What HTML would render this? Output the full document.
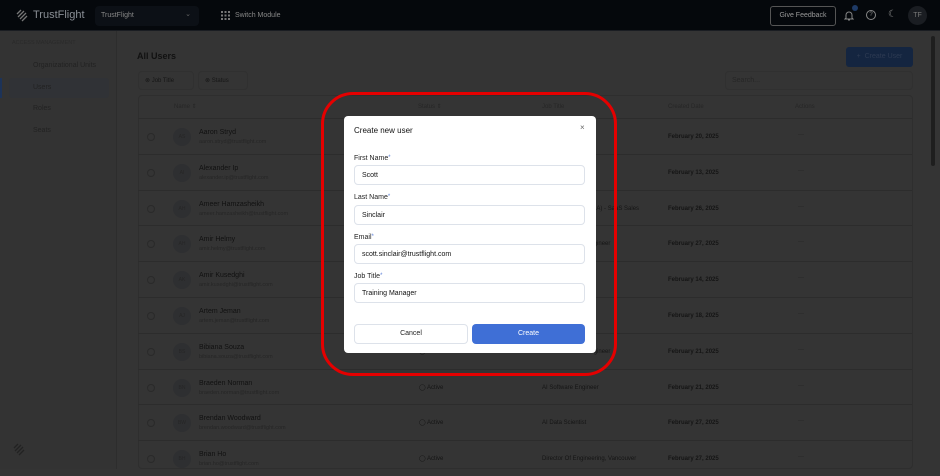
<!DOCTYPE html>
<html style="background:#343434"><head><meta charset="utf-8"><style>
*{box-sizing:border-box;margin:0;padding:0;line-height:1.2}
html,body{background:#343434}
body{width:940px;height:469px;overflow:hidden;font-family:"Liberation Sans",sans-serif;position:relative;color:#111}
.a{position:absolute}
.top{left:0;top:0;width:940px;height:31px;background:#05080c;border-bottom:1px solid #1a1d22}
.side{left:0;top:31px;width:117px;height:438px;background:#333;border-right:1px solid #2d2d2d}
.nav{left:9px;width:100px;height:20px;font-size:7px;color:#222;padding:6px 0 0 24px}
.row{left:138px;width:774px;height:36px;border-top:1px solid #2c2c2c}
.t{position:absolute;font-size:6px;color:#151515;white-space:nowrap}
.nm{font-size:7px;color:#111}
.em{font-size:5.5px;color:#262626}
.av{position:absolute;width:18px;height:18px;border-radius:50%;background:#2e2f31;font-size:5px;color:#262626;text-align:center;line-height:18px}
.cb{position:absolute;width:8px;height:8px;border-radius:50%;border:1px solid #2a2a2a}
.lbl{position:absolute;left:10px;font-size:7px;color:#222}
.lbl b{color:#5b7fd8;font-weight:normal;font-size:6px;vertical-align:top}
.in{position:absolute;left:10px;width:231px;height:20px;border:1px solid #dde2ea;border-radius:4px;font-size:7px;color:#111;padding:6px 0 0 7px}
</style></head><body>
<div class="a top">
 <svg class="a" style="left:15px;top:9px" width="14" height="14" viewBox="0 0 14 14" stroke="#777" stroke-width="1.3" fill="none"><path d="M2 5l4-4M3 8l6-6M5 10l6-6M7 12l5-5"/></svg>
 <div class="a" style="left:33px;top:9px;font-size:11px;color:#8a8f96">TrustFlight</div>
 <div class="a" style="left:95px;top:6px;width:104px;height:20px;background:#0c1016;border-radius:4px;font-size:7px;color:#888;padding:6px 0 0 6px">TrustFlight<span style="position:absolute;right:8px;top:5px;color:#666">⌄</span></div>
 <svg class="a" style="left:221px;top:11px" width="9" height="9" fill="#777"><g><rect x="0" y="0" width="2" height="2"/><rect x="3.5" y="0" width="2" height="2"/><rect x="7" y="0" width="2" height="2"/><rect x="0" y="3.5" width="2" height="2"/><rect x="3.5" y="3.5" width="2" height="2"/><rect x="7" y="3.5" width="2" height="2"/><rect x="0" y="7" width="2" height="2"/><rect x="3.5" y="7" width="2" height="2"/><rect x="7" y="7" width="2" height="2"/></g></svg>
 <div class="a" style="left:235px;top:12px;font-size:7px;color:#888">Switch Module</div>
 <div class="a" style="left:770px;top:6px;width:66px;height:20px;border:1px solid #555;border-radius:3px;font-size:7px;color:#999;text-align:center;line-height:18px">Give Feedback</div>
 <svg class="a" style="left:844px;top:10px" width="10" height="11" fill="none" stroke="#888" stroke-width="1"><path d="M2 8V5a3 3 0 016 0v3l1 1H1zM4 10h2"/></svg>
 <div class="a" style="left:852px;top:5px;width:6px;height:6px;border-radius:50%;background:#1e3a66"></div>
 <div class="a" style="left:866px;top:10px;width:10px;height:10px;border:1px solid #888;border-radius:50%;font-size:6px;color:#888;text-align:center;line-height:8px">?</div>
 <div class="a" style="left:888px;top:9px;font-size:10px;color:#888">☾</div>
 <div class="a" style="left:908px;top:6px;width:19px;height:19px;border-radius:50%;background:#1a1d22;font-size:7px;color:#777;text-align:center;line-height:19px">TF</div>
</div>
<div class="a side">
 <div class="a" style="left:12px;top:9px;font-size:5.5px;color:#2a2a2a">ACCESS MANAGEMENT</div>
 <div class="a nav" style="top:25px">Organizational Units</div>
 <div class="a nav" style="top:47px;background:#303236;border-radius:3px">Users</div>
 <div class="a" style="left:0;top:47px;width:2px;height:20px;background:#1d3358"></div>
 <div class="a nav" style="top:68px">Roles</div>
 <div class="a nav" style="top:90px">Seats</div>
 <svg class="a" style="left:12px;top:412px" width="14" height="14" viewBox="0 0 14 14" stroke="#222" stroke-width="1.3" fill="none"><path d="M2 5l4-4M3 8l6-6M5 10l6-6M7 12l5-5"/></svg>
</div>
<div class="a" style="left:137px;top:51px;font-size:9px;font-weight:bold;color:#111">All Users</div>
<div class="a" style="left:846px;top:47px;width:67px;height:20px;background:#142540;border-radius:3px;font-size:7px;color:#2d3a52;text-align:center;line-height:20px">+ &nbsp;Create User</div>
<div class="a" style="left:138px;top:71px;width:56px;height:19px;border:1px solid #303030;border-radius:4px;font-size:6px;color:#151515;padding:6px 0 0 6px">⊗ Job Title</div>
<div class="a" style="left:198px;top:71px;width:50px;height:19px;border:1px solid #303030;border-radius:4px;font-size:6px;color:#151515;padding:6px 0 0 6px">⊗ Status</div>
<div class="a" style="left:725px;top:71px;width:188px;height:19px;border:1px solid #303030;border-radius:4px;font-size:7px;color:#262626;padding:5px 0 0 6px">Search...</div>
<div class="a" style="left:138px;top:95px;width:775px;height:374px;border:1px solid #2e2e2e;border-radius:4px"></div>
<div class="t" style="left:174px;top:104px;color:#262626">Name ⇕</div>
<div class="t" style="left:418px;top:104px;color:#262626">Status ⇕</div>
<div class="t" style="left:542px;top:104px;color:#262626">Job Title</div>
<div class="t" style="left:668px;top:104px;color:#262626">Created Date</div>
<div class="t" style="left:795px;top:104px;color:#262626">Actions</div>
<div id="rows"></div>
<script>
var d=[["AS","Aaron Stryd","aaron.stryd","Training Manager","February 20, 2025"],["AI","Alexander Ip","alexander.ip","Software Engineer","February 13, 2025"],["AH","Ameer Hamzasheikh","ameer.hamzasheikh","Head of Sales (EMEA) - SaaS Sales","February 26, 2025"],["AH","Amir Helmy","amir.helmy","Senior Software Engineer","February 27, 2025"],["AK","Amir Kusedghi","amir.kusedghi","Chief Officer","February 14, 2025"],["AJ","Artem Jeman","artem.jeman","Product Manager","February 18, 2025"],["BS","Bibiana Souza","bibiana.souza","Senior Software Engineer","February 21, 2025"],["BN","Braeden Norman","braeden.norman","AI Software Engineer","February 21, 2025"],["BW","Brendan Woodward","brendan.woodward","AI Data Scientist","February 27, 2025"],["BH","Brian Ho","brian.ho","Director Of Engineering, Vancouver","February 27, 2025"]];
var h="";d.forEach(function(r,i){var y=118+i*35.8;h+='<div class="a row" style="top:'+y+'px"><div class="cb" style="left:9px;top:14px"></div><div class="av" style="left:35px;top:9px">'+r[0]+'</div><div class="t nm" style="left:61px;top:10px">'+r[1]+'</div><div class="t em" style="left:61px;top:20px">'+r[2]+'@trustflight.com</div><div class="t" style="left:281px;top:15px">◯ Active</div><div class="t" style="left:404px;top:15px">'+r[3]+'</div><div class="t" style="left:530px;top:15px;font-weight:bold">'+r[4]+'</div><div class="t" style="left:660px;top:13px">···</div></div>';});
document.getElementById("rows").innerHTML=h;
</script>
<div class="a" style="left:931px;top:36px;width:4px;height:130px;background:#1e1e1e;border-radius:2px"></div>
<div class="a" style="left:321px;top:92px;width:296px;height:284px;border:3px solid #e50000;border-radius:32px"></div>
<div class="a" style="left:344px;top:116px;width:252px;height:237px;background:#fff;border-radius:4px">
 <div class="a" style="left:10px;top:10px;font-size:8px;color:#111">Create new user</div>
 <div class="a" style="left:236px;top:7px;font-size:8px;color:#666">×</div>
 <div class="lbl" style="top:39px">First Name<b>*</b></div>
 <div class="in" style="top:49px">Scott</div>
 <div class="lbl" style="top:78px">Last Name<b>*</b></div>
 <div class="in" style="top:89px">Sinclair</div>
 <div class="lbl" style="top:118px">Email<b>*</b></div>
 <div class="in" style="top:128px">scott.sinclair@trustflight.com</div>
 <div class="lbl" style="top:157px">Job Title<b>*</b></div>
 <div class="in" style="top:167px">Training Manager</div>
 <div class="a" style="left:10px;top:208px;width:114px;height:20px;border:1px solid #dde2ea;border-radius:4px;font-size:7px;color:#222;text-align:center;line-height:18px">Cancel</div>
 <div class="a" style="left:128px;top:208px;width:113px;height:20px;background:#3f6fd6;border-radius:4px;font-size:7px;color:#fff;text-align:center;line-height:20px">Create</div>
</div>
</body></html>
